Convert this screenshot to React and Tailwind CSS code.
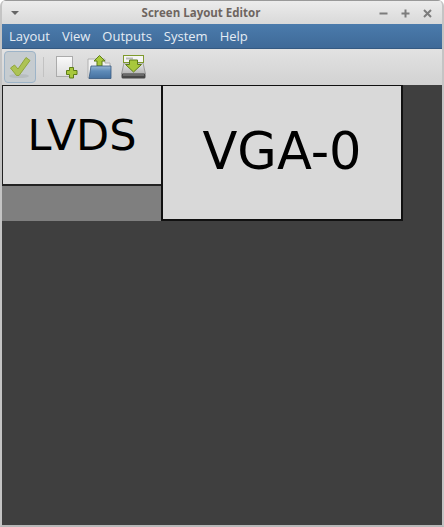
import React from "react";

const menus = ["Layout", "View", "Outputs", "System", "Help"];

const CheckIcon = () => (
  <svg width="24" height="24" viewBox="0 0 24 24">
    <ellipse cx="11" cy="21" rx="10" ry="2" fill="#aeb3b5" opacity="0.6" />
    <path
      d="M2.5 13 L6.5 10 L10 14 L18 2.5 L22 5.5 L11 20.5 L8.5 20.5 Z"
      fill="#adc354"
      stroke="#8fa53c"
      strokeWidth="1"
      strokeLinejoin="round"
    />
  </svg>
);

const NewIcon = () => (
  <svg width="22" height="23" viewBox="0 0 22 23">
    <defs>
      <linearGradient id="page" x1="0" y1="0" x2="0" y2="1">
        <stop offset="0" stopColor="#fafafa" />
        <stop offset="1" stopColor="#dedede" />
      </linearGradient>
    </defs>
    <rect x="0.5" y="0.5" width="16" height="20" fill="url(#page)" stroke="#ababab" />
    <path
      d="M13.5 11.5 h4 v3 h3.5 v4 h-3.5 v3.5 h-4 v-3.5 h-3 v-4 h3 Z"
      fill="#a8c83c"
      stroke="#5f7d18"
    />
  </svg>
);

const OpenIcon = () => (
  <svg width="25" height="24" viewBox="0 0 25 24">
    <defs>
      <linearGradient id="folder" x1="0" y1="0" x2="0" y2="1">
        <stop offset="0" stopColor="#9ab8d6" />
        <stop offset="0.4" stopColor="#5f8cb9" />
        <stop offset="1" stopColor="#44709e" />
      </linearGradient>
    </defs>
    <path d="M1 23 L1 4 H18 V8 H23 V23 Z" fill="#f2f2f2" stroke="#b0b0b0" />
    <path d="M12.5 0.5 L18 6 H15 V11 H10 V6 H7 Z" fill="#a8c83c" stroke="#5f7d18" />
    <path d="M4 11 H24 V23.5 H2 Z" fill="url(#folder)" stroke="#37597f" strokeWidth="0.8" />
  </svg>
);

const SaveIcon = () => (
  <svg width="25" height="24" viewBox="0 0 25 24">
    <defs>
      <linearGradient id="drive" x1="0" y1="0" x2="0" y2="1">
        <stop offset="0" stopColor="#e8e8e8" />
        <stop offset="1" stopColor="#b4b4b4" />
      </linearGradient>
    </defs>
    <path d="M3 8 H22 L24.5 19 H0.5 Z" fill="url(#drive)" stroke="#8c8c8c" strokeWidth="0.8" />
    <rect x="2.5" y="0.5" width="20" height="7" fill="#f4f4f4" stroke="#7f9a2c" />
    <rect x="5" y="2.5" width="7" height="2" fill="#b9b9b9" />
    <rect x="0.5" y="18.5" width="24" height="5" rx="1.5" fill="#474747" />
    <rect x="2" y="19.5" width="21" height="1" fill="#8d8d8d" />
    <path d="M8.5 5 H16.5 V9.5 H20.5 L12.5 17 L4.5 9.5 H8.5 Z" fill="#a8c83c" stroke="#5f7d18" />
  </svg>
);

const App = () => {
  return (
    <div
      className="flex flex-col w-[444px] h-[527px] overflow-hidden rounded-t-[6px] bg-[#d6d6d6] border-2 border-t-0 border-[#c4c4c4] border-b-[#b8b8b8]"
      style={{ fontFamily: '"Open Sans", sans-serif' }}
    >
      <div className="relative flex items-center justify-center h-6 shrink-0 pr-[42px] bg-gradient-to-b from-[#ececec] to-[#d9d9d9] border-t border-[#999] text-[11.5px] font-bold text-[#6e6560]">
        <span className="absolute left-[9px] top-[10px] w-0 h-0 border-x-[4px] border-x-transparent border-t-[4px] border-t-[#666]"></span>
        Screen Layout Editor
        <div className="absolute right-[10px] top-[8px] flex gap-[13px]">
          <svg width="9" height="9" viewBox="0 0 9 9">
            <path d="M0.5 4.5 H8.5" stroke="#7c7c7c" strokeWidth="2" />
          </svg>
          <svg width="9" height="9" viewBox="0 0 9 9">
            <path d="M0.5 4.5 H8.5 M4.5 0.5 V8.5" stroke="#7c7c7c" strokeWidth="2" />
          </svg>
          <svg width="9" height="9" viewBox="0 0 9 9">
            <path d="M1 1 L8 8 M8 1 L1 8" stroke="#7c7c7c" strokeWidth="2" />
          </svg>
        </div>
      </div>
      <div className="flex items-center h-[25px] shrink-0 pt-[2px] px-[7px] gap-[12px] bg-gradient-to-b from-[#4b7bac] to-[#3f6a98] border-b border-[#355a82] text-[13px] text-[#e4ecf4]">
        {menus.map((m) => (
          <span key={m}>{m}</span>
        ))}
      </div>
      <div className="flex items-center h-[36px] shrink-0 px-[2px] bg-gradient-to-b from-[#e2e2e2] to-[#d2d2d2]">
        <div className="flex items-center justify-center w-[32px] h-[32px] rounded-[4px] bg-[#c6ccd0] border border-[#9db4c8]">
          <CheckIcon />
        </div>
        <div className="w-px h-[20px] ml-[7px] mr-[12px] bg-[#c2c2c2]"></div>
        <NewIcon />
        <div className="ml-[9px]">
          <OpenIcon />
        </div>
        <div className="ml-[9px]">
          <SaveIcon />
        </div>
      </div>
      <div className="flex flex-1 items-start bg-[#3f3f3f]">
        <div className="flex flex-col w-[159px] h-[136px] bg-[#7f7f7f]">
          <div
            className="flex items-center justify-center h-[101px] bg-[#d9d9d9] border border-b-2 border-r-0 border-[#222] text-[43px] text-black"
            style={{ fontFamily: '"DejaVu Sans", sans-serif' }}
          >
            LVDS
          </div>
        </div>
        <div
          className="flex items-center justify-center w-[242px] h-[136px] bg-[#d9d9d9] border-2 border-t border-[#111] text-[51px] text-black"
          style={{ fontFamily: '"DejaVu Sans", sans-serif' }}
        >
          VGA-0
        </div>
      </div>
    </div>
  );
};

export default App;
